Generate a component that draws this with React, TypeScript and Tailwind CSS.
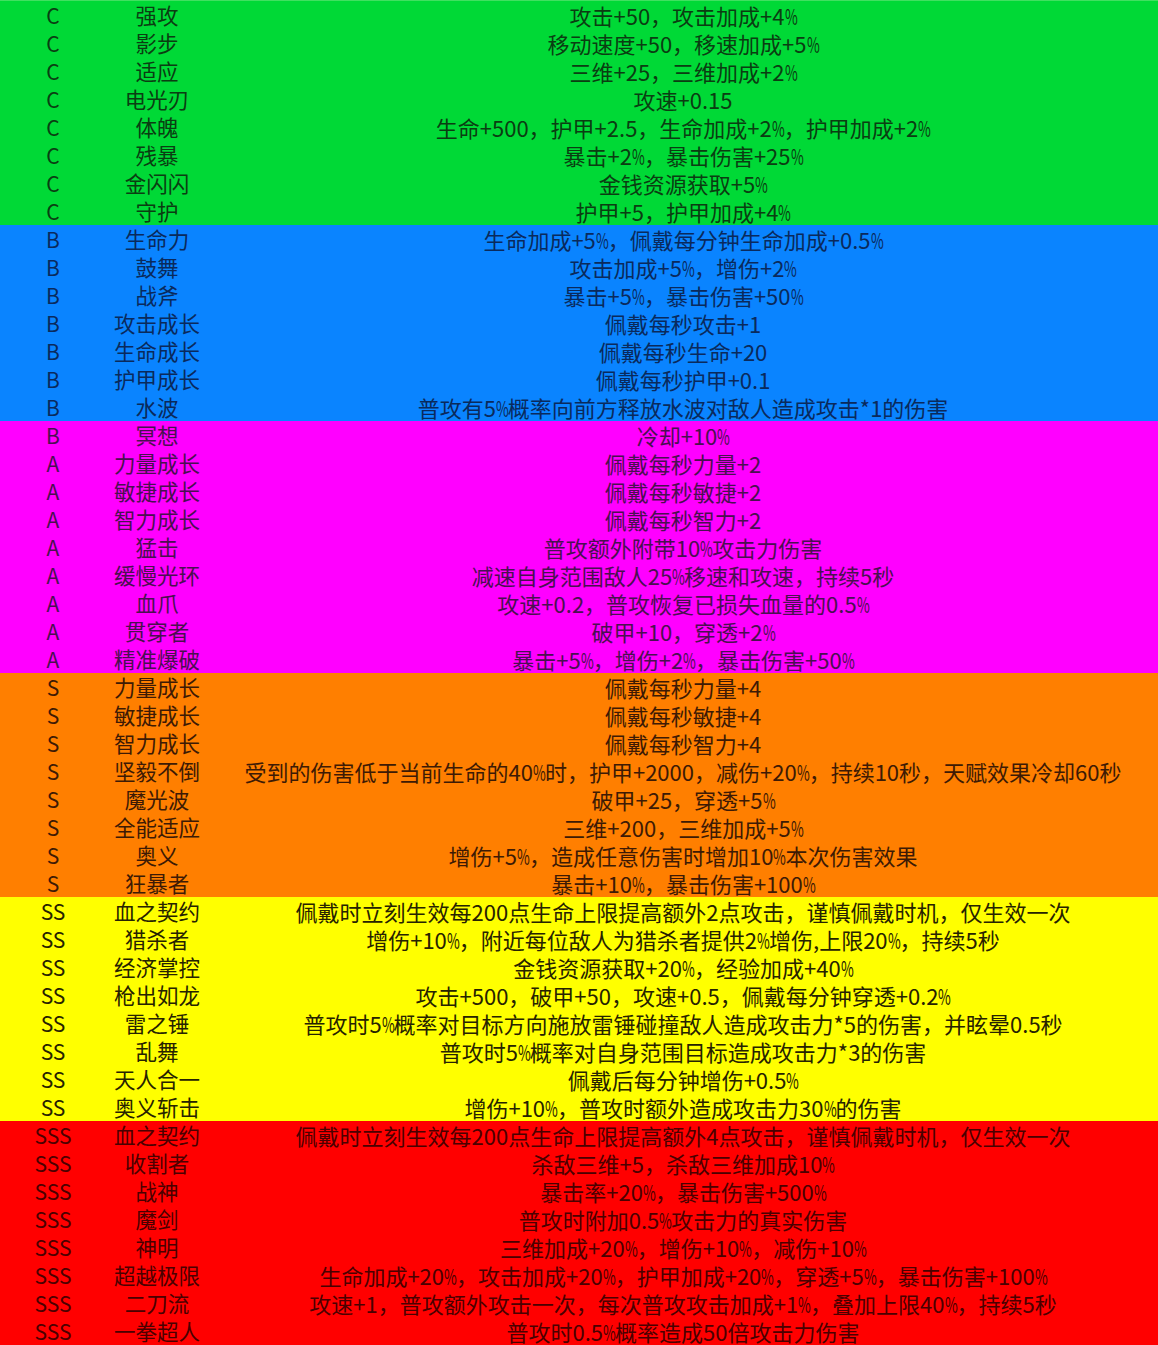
import React from "react";

type Row = [string, string, string];

const rows: Row[] = [
  ["C", "强攻", "攻击+50，攻击加成+4%"],
  ["C", "影步", "移动速度+50，移速加成+5%"],
  ["C", "适应", "三维+25，三维加成+2%"],
  ["C", "电光刃", "攻速+0.15"],
  ["C", "体魄", "生命+500，护甲+2.5，生命加成+2%，护甲加成+2%"],
  ["C", "残暴", "暴击+2%，暴击伤害+25%"],
  ["C", "金闪闪", "金钱资源获取+5%"],
  ["C", "守护", "护甲+5，护甲加成+4%"],
  ["B", "生命力", "生命加成+5%，佩戴每分钟生命加成+0.5%"],
  ["B", "鼓舞", "攻击加成+5%，增伤+2%"],
  ["B", "战斧", "暴击+5%，暴击伤害+50%"],
  ["B", "攻击成长", "佩戴每秒攻击+1"],
  ["B", "生命成长", "佩戴每秒生命+20"],
  ["B", "护甲成长", "佩戴每秒护甲+0.1"],
  ["B", "水波", "普攻有5%概率向前方释放水波对敌人造成攻击*1的伤害"],
  ["B", "冥想", "冷却+10%"],
  ["A", "力量成长", "佩戴每秒力量+2"],
  ["A", "敏捷成长", "佩戴每秒敏捷+2"],
  ["A", "智力成长", "佩戴每秒智力+2"],
  ["A", "猛击", "普攻额外附带10%攻击力伤害"],
  ["A", "缓慢光环", "减速自身范围敌人25%移速和攻速，持续5秒"],
  ["A", "血爪", "攻速+0.2，普攻恢复已损失血量的0.5%"],
  ["A", "贯穿者", "破甲+10，穿透+2%"],
  ["A", "精准爆破", "暴击+5%，增伤+2%，暴击伤害+50%"],
  ["S", "力量成长", "佩戴每秒力量+4"],
  ["S", "敏捷成长", "佩戴每秒敏捷+4"],
  ["S", "智力成长", "佩戴每秒智力+4"],
  ["S", "坚毅不倒", "受到的伤害低于当前生命的40%时，护甲+2000，减伤+20%，持续10秒，天赋效果冷却60秒"],
  ["S", "魔光波", "破甲+25，穿透+5%"],
  ["S", "全能适应", "三维+200，三维加成+5%"],
  ["S", "奥义", "增伤+5%，造成任意伤害时增加10%本次伤害效果"],
  ["S", "狂暴者", "暴击+10%，暴击伤害+100%"],
  ["SS", "血之契约", "佩戴时立刻生效每200点生命上限提高额外2点攻击，谨慎佩戴时机，仅生效一次"],
  ["SS", "猎杀者", "增伤+10%，附近每位敌人为猎杀者提供2%增伤,上限20%，持续5秒"],
  ["SS", "经济掌控", "金钱资源获取+20%，经验加成+40%"],
  ["SS", "枪出如龙", "攻击+500，破甲+50，攻速+0.5，佩戴每分钟穿透+0.2%"],
  ["SS", "雷之锤", "普攻时5%概率对目标方向施放雷锤碰撞敌人造成攻击力*5的伤害，并眩晕0.5秒"],
  ["SS", "乱舞", "普攻时5%概率对自身范围目标造成攻击力*3的伤害"],
  ["SS", "天人合一", "佩戴后每分钟增伤+0.5%"],
  ["SS", "奥义斩击", "增伤+10%，普攻时额外造成攻击力30%的伤害"],
  ["SSS", "血之契约", "佩戴时立刻生效每200点生命上限提高额外4点攻击，谨慎佩戴时机，仅生效一次"],
  ["SSS", "收割者", "杀敌三维+5，杀敌三维加成10%"],
  ["SSS", "战神", "暴击率+20%，暴击伤害+500%"],
  ["SSS", "魔剑", "普攻时附加0.5%攻击力的真实伤害"],
  ["SSS", "神明", "三维加成+20%，增伤+10%，减伤+10%"],
  ["SSS", "超越极限", "生命加成+20%，攻击加成+20%，护甲加成+20%，穿透+5%，暴击伤害+100%"],
  ["SSS", "二刀流", "攻速+1，普攻额外攻击一次，每次普攻攻击加成+1%，叠加上限40%，持续5秒"],
  ["SSS", "一拳超人", "普攻时0.5%概率造成50倍攻击力伤害"],
];

function rowClass(i: number): string {
  if (i < 8) return "bg-[#00d936] text-[#0b3d12]";
  if (i < 15) return "bg-[#0a84ff] text-[#0a2a5c]";
  if (i < 24) return "bg-[#ff00ff] text-[#4a1050]";
  if (i < 32) return "bg-[#ff7f00] text-[#3d1a05]";
  if (i < 40) return "bg-[#ffff00] text-[#262200]";
  return "bg-[#ff0000] text-[#4a0000]";
}

function Desc({ text }: { text: string }) {
  const parts = text.split("%");
  return (
    <>
      {parts.map((p, j) => (
        <React.Fragment key={j}>
          {p}
          {j < parts.length - 1 && (
            <span className="inline-block w-[12px] origin-left scale-x-[0.63]">%</span>
          )}
        </React.Fragment>
      ))}
    </>
  );
}

export default function App() {
  return (
    <div
      className="w-[1158px] h-[1345px] overflow-hidden pt-px bg-[#40e060]"
      style={{ fontFamily: '"Noto Sans CJK SC", "Noto Sans", sans-serif' }}
    >
      {rows.map((r, i) => (
        <div key={i} className={`flex h-[28px] items-center leading-[28px] ${rowClass(i)}`}>
          <div className="w-[106px] text-center text-[21px]">{r[0]}</div>
          <div className="w-[102px] text-center text-[21.5px]">{r[1]}</div>
          <div className="flex-1 text-center whitespace-nowrap text-[22px]">
            <Desc text={r[2]} />
          </div>
        </div>
      ))}
    </div>
  );
}
